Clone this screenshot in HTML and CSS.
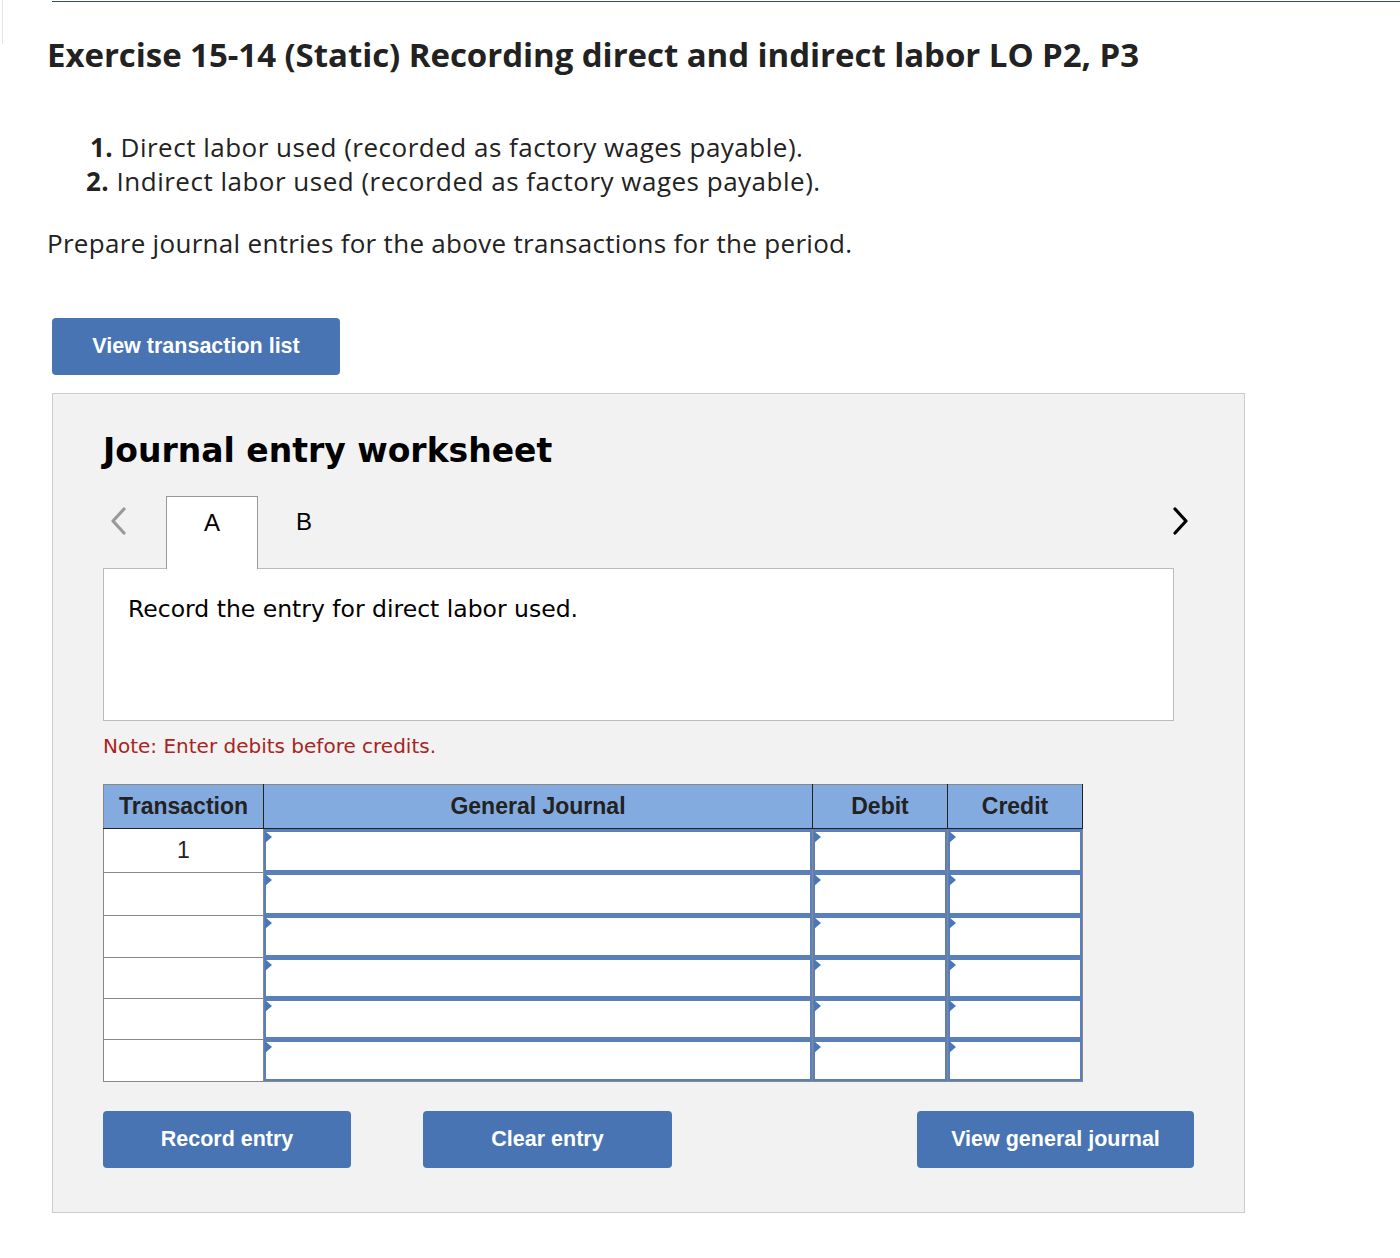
FILE: index.html
```html
<!DOCTYPE html>
<html>
<head>
    <title>Exercise 15-14 (Static)</title>
    <link rel="stylesheet" href="styles.css">
</head>
<body>
    <div class="top-bar"></div>
    <div class="side-mark"></div>
    <div class="page">
        <h1>Exercise 15-14 (Static) Recording direct and indirect labor LO P2, P3</h1>
        <ol class="steps">
            <li><b>1.</b> Direct labor used (recorded as factory wages payable).</li>
            <li><b>2.</b> Indirect labor used (recorded as factory wages payable).</li>
        </ol>
        <p class="prompt">Prepare journal entries for the above transactions for the period.</p>

        <button class="btn btn-list">View transaction list</button>

        <div class="worksheet">
            <h2>Journal entry worksheet</h2>

            <div class="tabs">
                <span class="arrow arrow-prev">
                    <svg width="20" height="30" viewBox="0 0 20 30"><path d="M16 3 L5 15 L16 27" fill="none" stroke="#999" stroke-width="3.2" stroke-linecap="round" stroke-linejoin="round"/></svg>
                </span>
                <div class="tab active">A</div>
                <div class="tab">B</div>
                <span class="arrow arrow-next">
                    <svg width="20" height="30" viewBox="0 0 20 30"><path d="M4 3 L15 15 L4 27" fill="none" stroke="#000" stroke-width="3.2" stroke-linecap="round" stroke-linejoin="round"/></svg>
                </span>
            </div>
            <div class="tab-body">
                <p>Record the entry for direct labor used.</p>
            </div>

            <p class="note">Note: Enter debits before credits.</p>

            <table class="journal">
                <thead>
                    <tr>
                        <th class="col-trans">Transaction</th>
                        <th class="col-gj">General Journal</th>
                        <th class="col-amt">Debit</th>
                        <th class="col-amt">Credit</th>
                    </tr>
                </thead>
                <tbody>
                    <tr>
                        <td class="trans">1</td>
                        <td class="cell"><div class="field"></div></td>
                        <td class="cell"><div class="field"></div></td>
                        <td class="cell"><div class="field"></div></td>
                    </tr>
                    <tr>
                        <td class="trans"></td>
                        <td class="cell"><div class="field"></div></td>
                        <td class="cell"><div class="field"></div></td>
                        <td class="cell"><div class="field"></div></td>
                    </tr>
                    <tr>
                        <td class="trans"></td>
                        <td class="cell"><div class="field"></div></td>
                        <td class="cell"><div class="field"></div></td>
                        <td class="cell"><div class="field"></div></td>
                    </tr>
                    <tr>
                        <td class="trans"></td>
                        <td class="cell"><div class="field"></div></td>
                        <td class="cell"><div class="field"></div></td>
                        <td class="cell"><div class="field"></div></td>
                    </tr>
                    <tr>
                        <td class="trans"></td>
                        <td class="cell"><div class="field"></div></td>
                        <td class="cell"><div class="field"></div></td>
                        <td class="cell"><div class="field"></div></td>
                    </tr>
                    <tr>
                        <td class="trans"></td>
                        <td class="cell"><div class="field"></div></td>
                        <td class="cell"><div class="field"></div></td>
                        <td class="cell"><div class="field"></div></td>
                    </tr>
                </tbody>
            </table>

            <div class="actions">
                <button class="btn btn-record">Record entry</button>
                <button class="btn btn-clear">Clear entry</button>
                <button class="btn btn-view">View general journal</button>
            </div>
        </div>
    </div>
</body>
</html>
```

FILE: styles.css
```css
body {
    margin: 0;
    font-family: "Open Sans", Lato, sans-serif;
    color: #222;
    background: #fff;
}
.top-bar {
    margin-left: 52px;
    height: 1px;
    border-bottom: 1px solid #3a4a6a;
}
.side-mark {
    position: absolute;
    left: 0;
    top: 0;
    width: 2px;
    height: 44px;
    border-right: 1px solid #e4e4e4;
}
.page {
    padding: 0 0 40px 47px;
}
h1 {
    margin: 32px 0 0;
    font-size: 33px;
    line-height: 42px;
    font-weight: 700;
    color: #222;
    letter-spacing: -0.05px;
}
.steps {
    list-style: none;
    margin: 54px 0 0;
    padding: 0 0 0 43px;
    font-size: 26px;
    line-height: 34px;
    letter-spacing: 0.5px;
}
.steps li:last-child {
    margin-left: -4px;
}
.prompt {
    margin: 28px 0 0;
    font-size: 26px;
    line-height: 34px;
    letter-spacing: 0.3px;
}
.btn {
    display: inline-block;
    background-color: #4874b4;
    color: #fff;
    border: none;
    border-radius: 4px;
    font-family: "Liberation Sans", Arial, sans-serif;
    font-weight: 700;
    font-size: 21.5px;
    height: 57px;
    cursor: pointer;
}
.btn-list {
    margin: 58px 0 0 5px;
    width: 288px;
}
.worksheet {
    margin: 18px 0 0 5px;
    width: 1193px;
    height: 820px;
    box-sizing: border-box;
    background: #f2f2f2;
    border: 1px solid #ccc;
    padding: 0 0 0 50px;
    font-family: "DejaVu Sans", Verdana, sans-serif;
}
.worksheet h2 {
    margin: 37px 0 0;
    font-size: 33px;
    line-height: 40px;
    font-weight: 700;
    color: #000;
}
.tabs {
    display: flex;
    align-items: flex-start;
    margin-top: 25px;
    height: 72px;
    width: 1071px;
}
.arrow {
    display: flex;
    align-items: center;
    padding-top: 10px;
}
.arrow-prev {
    width: 63px;
    padding-left: 5px;
    box-sizing: border-box;
}
.arrow-next {
    margin-left: auto;
    margin-right: -17px;
}
.tab {
    width: 92px;
    height: 72px;
    box-sizing: border-box;
    display: flex;
    align-items: flex-start;
    justify-content: center;
    padding-top: 12px;
    font-family: "Liberation Sans", Arial, sans-serif;
    font-size: 24px;
    color: #000;
}
.tab.active {
    background: #fff;
    border: 1px solid #999;
    border-bottom: none;
    position: relative;
    z-index: 1;
    height: 73px;
}
.tab-body {
    width: 1071px;
    height: 153px;
    box-sizing: border-box;
    background: #fff;
    border: 1px solid #bbb;
    padding: 24px 24px;
}
.tab-body p {
    margin: 0;
    font-size: 23.5px;
    line-height: 32px;
    color: #000;
}
.note {
    margin: 12px 0 0;
    font-size: 20px;
    line-height: 26px;
    color: #a8241e;
}
.journal {
    margin-top: 25px;
    border-collapse: collapse;
    width: 976px;
    table-layout: fixed;
}
.journal th {
    background: #84abdf;
    height: 43px;
    padding: 0;
    font-family: "Liberation Sans", Arial, sans-serif;
    font-size: 23px;
    font-weight: 700;
    color: #222;
    border: 1px solid #222;
    border-top-color: #888;
    border-left-color: #888;
}
.col-trans {
    width: 159px;
}
.col-gj {
    width: 548px;
}
.col-amt {
    width: 134px;
}
.journal td {
    height: 40px;
    padding: 0;
    background: #fff;
}
.trans {
    border: 1px solid #888;
    text-align: center;
    vertical-align: top;
    padding-top: 8px !important;
    font-family: "Liberation Sans", Arial, sans-serif;
    font-size: 23px;
    color: #222;
    box-sizing: border-box;
}
.cell {
    border: 1px solid #888;
    border-top: none;
    border-bottom: none;
}
.journal tbody tr:last-child .cell {
    border-bottom: 1px solid #888;
}
.field {
    position: relative;
    height: 41px;
    box-sizing: border-box;
    border: 2px solid #5a80bb;
    border-top-width: 3px;
    background: #fff;
}
.journal tbody tr:nth-child(1) .field,
.journal tbody tr:nth-child(2) .field {
    height: 43px;
}
.journal tbody tr:nth-child(3) .field,
.journal tbody tr:nth-child(6) .field {
    height: 42px;
}
.field::before {
    content: "";
    position: absolute;
    left: -1px;
    top: -1px;
    border-left: 7px solid #4a77b8;
    border-top: 6px solid transparent;
    border-bottom: 6px solid transparent;
}
.actions {
    display: flex;
    margin-top: 29px;
    width: 1091px;
}
.btn-record {
    width: 248px;
}
.btn-clear {
    width: 249px;
    margin-left: 72px;
}
.btn-view {
    width: 277px;
    margin-left: auto;
}
```
